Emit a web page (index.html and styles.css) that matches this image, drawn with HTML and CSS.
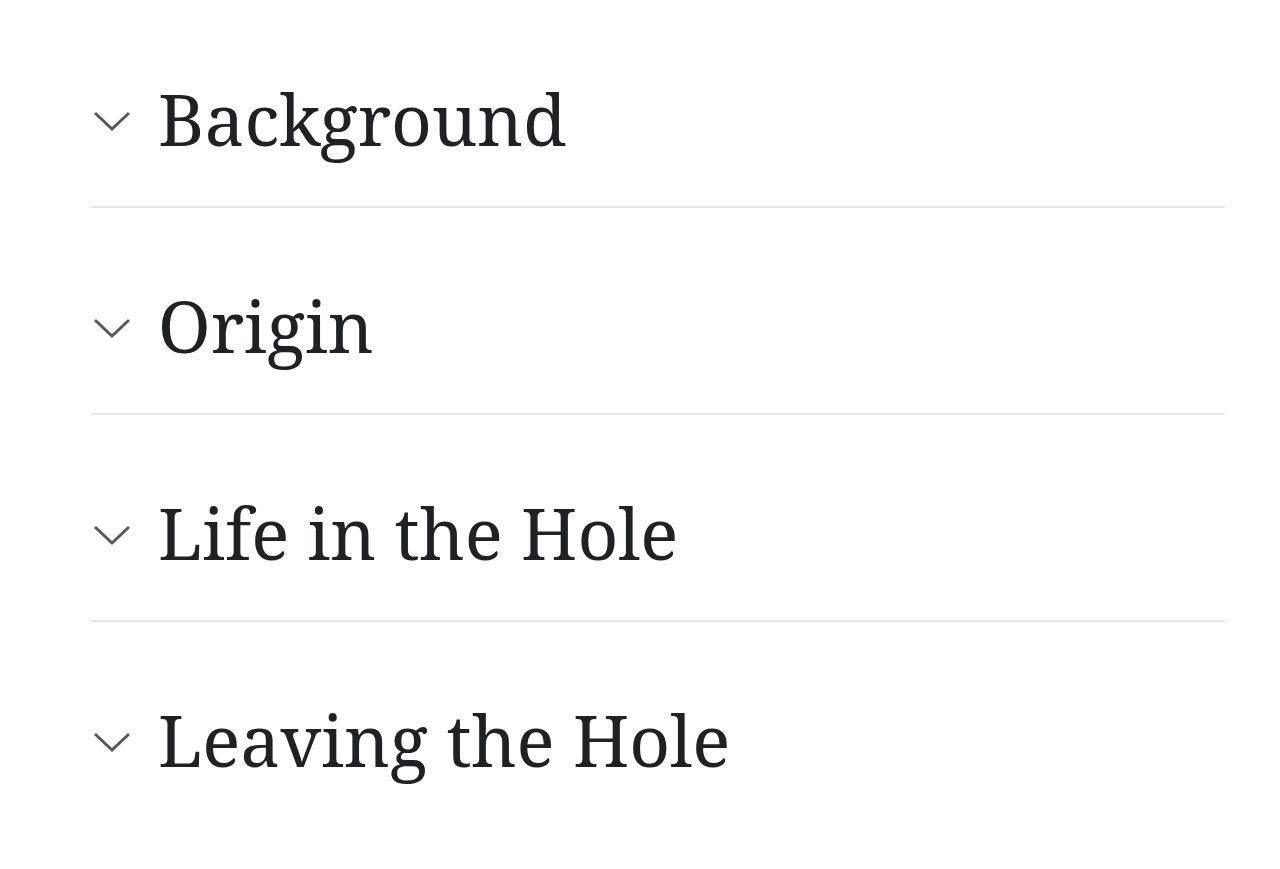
FILE: index.html
```html
<!DOCTYPE html>
<html>
<head>
<meta charset="utf-8">
<link rel="stylesheet" href="styles.css">
</head>
<body>
<div class="sections">
  <div class="section">
    <h2 class="heading"><span class="chev"><svg width="38" height="22" viewBox="0 0 38 22"><path d="M2 3 L19 19 L36 3" fill="none" stroke="#54595d" stroke-width="3"/></svg></span><span class="title">Background</span></h2>
  </div>
  <div class="section">
    <h2 class="heading"><span class="chev"><svg width="38" height="22" viewBox="0 0 38 22"><path d="M2 3 L19 19 L36 3" fill="none" stroke="#54595d" stroke-width="3"/></svg></span><span class="title">Origin</span></h2>
  </div>
  <div class="section">
    <h2 class="heading"><span class="chev"><svg width="38" height="22" viewBox="0 0 38 22"><path d="M2 3 L19 19 L36 3" fill="none" stroke="#54595d" stroke-width="3"/></svg></span><span class="title">Life in the Hole</span></h2>
  </div>
  <div class="section last">
    <h2 class="heading"><span class="chev"><svg width="38" height="22" viewBox="0 0 38 22"><path d="M2 3 L19 19 L36 3" fill="none" stroke="#54595d" stroke-width="3"/></svg></span><span class="title">Leaving the Hole</span></h2>
  </div>
</div>
</body>
</html>
```
FILE: styles.css
```css
html, body {
  margin: 0;
  padding: 0;
  background: #ffffff;
}
.sections {
  padding: 1px 55px 0 91px;
}
.section {
  height: 205px;
  border-bottom: 2px solid #e6e6e6;
}
.section.last {
  border-bottom: none;
}
.heading {
  margin: 0;
  padding-top: 70px;
  display: flex;
  align-items: center;
  font-family: "Noto Serif", "DejaVu Serif", serif;
  font-weight: normal;
  font-size: 71px;
  line-height: 96px;
  color: #202122;
}
.chev {
  display: flex;
  width: 67px;
  padding-left: 2px;
  padding-top: 4px;
  box-sizing: border-box;
}
.chev svg {
  display: block;
}
```
